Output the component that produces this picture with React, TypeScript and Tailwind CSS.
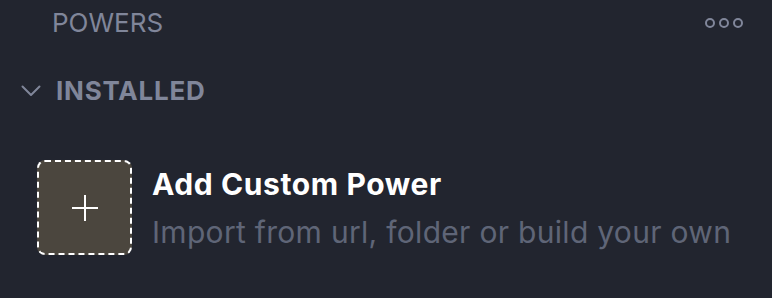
import React from "react";

export default function App() {
  return (
    <div className="w-[772px] h-[298px] bg-[#22252f] overflow-hidden" style={{ fontFamily: "Inter, 'Noto Sans', sans-serif" }}>
      <div className="flex items-center justify-between h-[46px] pl-[52px] pr-[29px]">
        <span className="text-[26px] text-[#80869a] leading-[32px]">POWERS</span>
        <div className="flex gap-[4px] items-center">
          <span className="w-[10px] h-[10px] rounded-full border-[2.5px] border-[#80869a]" />
          <span className="w-[10px] h-[10px] rounded-full border-[2.5px] border-[#80869a]" />
          <span className="w-[10px] h-[10px] rounded-full border-[2.5px] border-[#80869a]" />
        </div>
      </div>
      <div className="flex items-center h-[46px] mt-[22px] pl-[21px]">
        <svg width="20" height="12" viewBox="0 0 20 12" fill="none" className="mr-[15px]">
          <path d="M1.5 1.5 L10 10 L18.5 1.5" stroke="#80869a" strokeWidth="2" strokeLinecap="round" strokeLinejoin="round" />
        </svg>
        <span className="text-[26px] font-bold text-[#80869a] tracking-[0.03em] leading-[32px]">INSTALLED</span>
      </div>
      <div className="flex items-center mt-[46px] pl-[37px]">
        <div className="w-[95px] h-[95px] rounded-[8px] border-2 border-dashed border-white bg-[#4b463e] flex items-center justify-center">
          <svg width="26" height="26" viewBox="0 0 26 26">
            <path d="M13 0 V26 M0 13 H26" stroke="white" strokeWidth="2" />
          </svg>
        </div>
        <div className="ml-[20px] flex flex-col">
          <span className="text-[30px] font-bold text-white leading-[36px] tracking-[0.02em]">Add Custom Power</span>
          <span className="text-[30px] text-[#5f6577] leading-[36px] mt-[12px] tracking-[0.01em]">Import from url, folder or build your own</span>
        </div>
      </div>
    </div>
  );
}
